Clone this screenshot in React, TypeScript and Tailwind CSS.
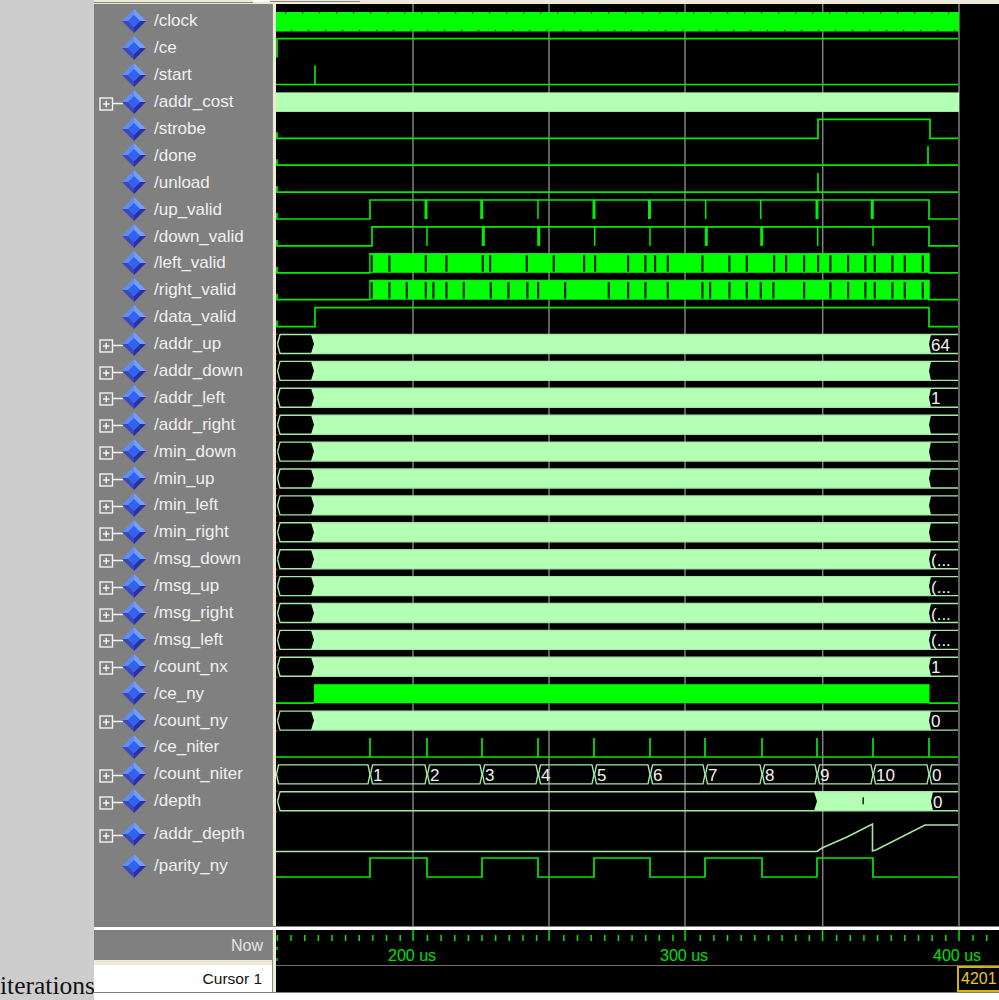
import React from "react";

const sans = "font-['Liberation_Sans',Arial,sans-serif]";

type Sig = { n: string; plus?: boolean; cls?: string };
const signals: Sig[] = [
  { n: "/clock" }, { n: "/ce" }, { n: "/start" }, { n: "/addr_cost", plus: true }, { n: "/strobe" }, { n: "/done" },
  { n: "/unload" }, { n: "/up_valid" }, { n: "/down_valid" }, { n: "/left_valid" }, { n: "/right_valid" }, { n: "/data_valid" },
  { n: "/addr_up", plus: true }, { n: "/addr_down", plus: true }, { n: "/addr_left", plus: true }, { n: "/addr_right", plus: true },
  { n: "/min_down", plus: true }, { n: "/min_up", plus: true }, { n: "/min_left", plus: true }, { n: "/min_right", plus: true },
  { n: "/msg_down", plus: true }, { n: "/msg_up", plus: true }, { n: "/msg_right", plus: true }, { n: "/msg_left", plus: true },
  { n: "/count_nx", plus: true }, { n: "/ce_ny" }, { n: "/count_ny", plus: true }, { n: "/ce_niter" }, { n: "/count_niter", plus: true },
  { n: "/depth", plus: true }, { n: "/addr_depth", plus: true, cls: "mt-[6px]" }, { n: "/parity_ny", plus: false, cls: "mt-[5px]" },
];

function TreeIcon({ plus }: { plus?: boolean }) {
  return (
    <svg width="48" height="26" viewBox="0 0 48 26" className="shrink-0">
      {plus && (
        <g fill="none" stroke="#f4f4f4" strokeWidth="1.4">
          <rect x="1" y="9" width="12.5" height="12" />
          <path d="M4 15H10.5M7.2 11.8V18.2M13.5 14.5H24" />
        </g>
      )}
      <polygon points="35,1 47,13 41,13 35,7" fill="#6f9fff" />
      <polygon points="35,1 23,13 29,13 35,7" fill="#5f8cf5" />
      <polygon points="47,13 35,25 35,19 41,13" fill="#2a2fa8" />
      <polygon points="23,13 35,25 35,19 29,13" fill="#3b47bd" />
      <polygon points="35,7 41,13 35,19 29,13" fill="#2f62f5" />
    </svg>
  );
}

const hi = (i: number) => 11.7 + 26.9 * i;
const lo = (i: number) => 30.7 + 26.9 * i;
const G = "#00ec00";
const B = "#b3ffb3";
const E = "#a6e8a6";
const END = 958;
const iters = [370, 427, 482, 538, 594, 650, 705, 762, 817, 873, 929];

function Line({ d, w = 1.7 }: { d: string; w?: number }) {
  return <path d={d} fill="none" stroke={G} strokeWidth={w} />;
}

function Dips({ i, rise, fall, dips }: { i: number; rise: number; fall: number; dips: [number, number][] }) {
  const h = hi(i);
  const l = lo(i);
  return (
    <g>
      <Line d={`M277 ${l - 6}V${l}H${rise}V${h}H${fall}V${l}H${END}`} />
      {dips.map(([x, w]) => (
        <rect key={x} x={x - w / 2} y={h} width={w} height={l - h} fill="#00f000" />
      ))}
    </g>
  );
}

function Burst({ i, gaps }: { i: number; gaps: number[] }) {
  const h = hi(i);
  const l = lo(i);
  return (
    <g>
      <Line d={`M277 ${l - 6}V${l}H370V${h}H929V${l}H${END}`} />
      <rect x={371} y={h} width={558} height={l - h} fill="#00ff00" />
      {gaps.map((x) => (
        <rect key={x} x={x - 1} y={h + 1.4} width={2.2} height={l - h - 2.6} fill="#062006" />
      ))}
    </g>
  );
}

function Bus({ i, from = 314, to = 929, value, tick }: { i: number; from?: number; to?: number; value?: string; tick?: number }) {
  const t = hi(i);
  const b = lo(i);
  const m = (t + b) / 2;
  return (
    <g>
      <polygon
        points={`${from - 3},${t} ${to + 2},${t} ${to},${m} ${to + 2},${b} ${from - 3},${b} ${from},${m}`}
        fill={B}
      />
      <path
        d={`M277.5 ${m}L280 ${t}H${END}M277.5 ${m}L280 ${b}H${END}`}
        fill="none"
        stroke={E}
        strokeWidth="1.4"
      />
      <rect x="276" y={t - 1} width="1.5" height="1.5" fill="#e02020" />
      <rect x="276" y={b} width="1.5" height="1.5" fill="#e02020" />
      {tick && <rect x={tick} y={m - 4} width="1.4" height="7" fill="#111" />}
      {value && (
        <text x={to + 2} y={b - 3} fontFamily="'Liberation Sans',Arial,sans-serif" fontSize="17" fill="#f2f2f2">
          {value}
        </text>
      )}
    </g>
  );
}

function Waves() {
  const notchTop: number[] = [];
  const notchBot: number[] = [];
  for (let k = 0; k < 40; k++) {
    notchTop.push(285 + k * 17);
    notchBot.push(291 + k * 17);
  }
  const upDips: [number, number][] = [[426, 3], [481.7, 3], [538, 1.5], [594, 3], [649.5, 3], [705.7, 1.5], [760.7, 1.5], [817, 3], [872.3, 3]];
  const dnDips: [number, number][] = [[427, 1.5], [483.3, 3], [538.7, 3], [594.7, 1.5], [650, 1.5], [706.3, 3], [761.7, 3], [817.7, 1.5], [873, 1.5]];
  const leftGaps = [371.7, 389.3, 425.7, 446.3, 482.7, 490, 526.7, 553.7, 584, 595, 628, 645.3, 655, 667.7, 702.3, 729.3, 746.7, 774, 786, 804, 818, 830.3, 848, 865.3, 874.7, 892.3, 904.7, 922.7];
  const rightGaps = [371.7, 389.3, 406.7, 425.7, 433.3, 446.3, 463.7, 490.7, 508.3, 527.3, 538, 565, 608.7, 628, 645.3, 667.7, 702.3, 710, 729.3, 746.7, 760.7, 773.3, 804, 830.3, 848, 865.3, 874.7, 892.3, 904.7, 922.7];
  const segs: [number, number, string][] = [
    [276, 370, ""], [370, 427, "1"], [427, 482, "2"], [482, 538, "3"], [538, 594, "4"], [594, 650, "5"],
    [650, 705, "6"], [705, 762, "7"], [762, 817, "8"], [817, 873, "9"], [873, 929, "10"], [929, 958, "0"],
  ];
  const tc = hi(28);
  const bc = lo(28);
  const mc = (tc + bc) / 2;
  return (
    <svg width="723" height="922" viewBox="276 4 723 922" className="block bg-black shrink-0">
      <path d="M413 4V926M549 4V926M685 4V926M822.7 4V926M959 4V926" stroke="#808080" strokeWidth="1.5" fill="none" />

      <rect x="276" y="12" width="683" height="19.5" fill="#00ff00" />
      {notchTop.map((x) => <rect key={x} x={x} y="12" width="1.2" height="1.6" fill="#043004" />)}
      {notchBot.map((x) => <rect key={x} x={x} y="29.9" width="1.2" height="1.6" fill="#043004" />)}

      <Line d={`M277 ${lo(1)}V${hi(1)}H${END}`} />
      <Line d={`M276 ${lo(2)}H${END}M315 ${lo(2)}V${lo(2) - 19}`} />
      <rect x="276" y={hi(3)} width="683" height="19.5" fill={B} />
      <Line d={`M277 ${lo(4) - 6}V${lo(4)}H818V${hi(4)}H930V${lo(4)}H${END}`} />
      <Line d={`M277 ${lo(5) - 6}V${lo(5)}H${END}M928 ${lo(5)}V${hi(5)}`} />
      <Line d={`M277 ${lo(6) - 6}V${lo(6)}H${END}M818 ${lo(6)}V${hi(6)}`} />
      <Dips i={7} rise={370} fall={929} dips={upDips} />
      <Dips i={8} rise={372} fall={929} dips={dnDips} />
      <Burst i={9} gaps={leftGaps} />
      <Burst i={10} gaps={rightGaps} />
      <Line d={`M277 ${lo(11) - 6}V${lo(11)}H315V${hi(11)}H929V${lo(11)}H${END}`} />

      <Bus i={12} value="64" />
      <Bus i={13} />
      <Bus i={14} value="1" />
      <Bus i={15} />
      <Bus i={16} />
      <Bus i={17} />
      <Bus i={18} />
      <Bus i={19} />
      <Bus i={20} value="(..." />
      <Bus i={21} value="(..." />
      <Bus i={22} value="(..." />
      <Bus i={23} value="(..." />
      <Bus i={24} value="1" />

      <rect x="314" y={hi(25)} width="615.5" height="19" fill="#00ff00" />
      <Line d={`M276 ${lo(25)}H314M929 ${lo(25)}H${END}`} />

      <Bus i={26} value="0" />

      <Line d={`M276 ${lo(27)}H${END}`} />
      {iters.map((x) => <Line key={x} d={`M${x} ${lo(27)}V${hi(27)}`} />)}

      {segs.map(([a, b, v]) => (
        <g key={a}>
          <path
            d={
              b === END
                ? `M${b} ${tc}H${a + 2.5}L${a + 0.5} ${mc}L${a + 2.5} ${bc}H${b}`
                : `M${a + 0.5} ${mc}L${a + 2.5} ${tc}H${b - 2}L${b} ${mc}L${b - 2} ${bc}H${a + 2.5}Z`
            }
            fill="none"
            stroke={E}
            strokeWidth="1.4"
          />
          {v && (
            <text x={a + 3} y={bc - 3} fontFamily="'Liberation Sans',Arial,sans-serif" fontSize="17" fill="#f2f2f2">
              {v}
            </text>
          )}
        </g>
      ))}

      <Bus i={29} from={817} to={931} value="0" tick={862.5} />

      <path d="M276 851.5H817L822 848L847 837L872.5 824V851L876 850L925 825H958" fill="none" stroke={E} strokeWidth="1.6" />
      <Line d="M276 877H370V858H427V877H482V858H538V877H594V858H650V877H705V858H762V877H817V858H873V877H958" />
    </svg>
  );
}

function Ruler() {
  const ticks: number[] = [];
  for (let k = -1; k < 53; k++) ticks.push(291 + k * 13.64);
  const majors = [413, 549, 685, 822.5, 959];
  return (
    <svg width="723" height="35" viewBox="276 930 723 35" className="block bg-black">
      {ticks.filter((x) => !majors.some((m) => Math.abs(m - x) < 5)).map((x) => (
        <rect key={x} x={x - 0.7} y="935" width="1.5" height="6" fill="#00e800" />
      ))}
      {majors.map((x) => <rect key={x} x={x - 0.7} y="930" width="1.5" height="11" fill="#00e800" />)}
      <path d="M277 947V950M277 958V961" stroke="#00e000" strokeWidth="1.4" fill="none" />
      <g fontFamily="'Liberation Sans',Arial,sans-serif" fontSize="16" fill="#00e000">
        <text x="388" y="961">200 us</text>
        <text x="660" y="961">300 us</text>
        <text x="933" y="961">400 us</text>
      </g>
    </svg>
  );
}

export default function App() {
  return (
    <div className={`flex w-[999px] h-[1000px] overflow-hidden bg-white ${sans}`}>
      <div className="w-[94px] h-full shrink-0 bg-[#cdcdcd] flex items-end">
        <span className="font-['Liberation_Serif','Times_New_Roman',serif] text-[25.5px] leading-[29px] text-[#111] whitespace-nowrap">
          iterations
        </span>
      </div>
      <div className="flex flex-col w-[905px] shrink-0">
        <div className="flex h-[4px] shrink-0 bg-[#ece9d8]">
          <div className="w-[159px] h-[3px] border-b border-[#8a8a80]" />
          <div className="w-[17px] h-[2px] bg-white" />
          <div className="w-[90px] h-[2px] border-b border-[#80807a]" />
        </div>
        <div className="flex h-[922px] shrink-0">
          <div className="w-[178px] shrink-0 bg-[#808080] pt-[3.5px] flex flex-col">
            {signals.map((s) => (
              <div key={s.n} className={`flex items-center h-[26.9px] shrink-0 pl-[5px] ${s.cls ?? ""}`}>
                <TreeIcon plus={s.plus} />
                <span className="ml-[7px] text-[17px] leading-none text-[#f0f0f0] whitespace-nowrap">
                  {s.n}
                </span>
              </div>
            ))}
          </div>
          <div className="w-[4px] shrink-0 bg-[#ece9d8] border-l border-[#8a8a80]" />
          <Waves />
        </div>
        <div className="h-[1px] shrink-0 bg-[#808078]" />
        <div className="h-[3px] shrink-0 bg-white" />
        <div className="flex h-[62px] shrink-0">
          <div className="w-[178px] shrink-0 flex flex-col">
            <div className="h-[30px] pt-[2px] bg-[#808080] flex items-center justify-end pr-[9px] text-[16px] text-[#e4e4e4]">Now</div>
            <div className="h-[5px] bg-[#ece9d8]" />
            <div className="h-[27px] bg-white flex items-center justify-end pr-[10px] text-[15.5px] text-[#111]">Cursor 1</div>
          </div>
          <div className="w-[4px] shrink-0 bg-[#ece9d8] border-l border-[#8a8a80]" />
          <div className="w-[723px] shrink-0 flex flex-col">
            <Ruler />
            <div className="h-[27px] bg-black border-t border-[#707070] flex justify-end">
              <div className="w-[42px] h-[26px] border-2 border-r-0 border-[#d8b400] pl-[2px] text-[16px] leading-[22px] text-[#e8c820] overflow-hidden">
                4201
              </div>
            </div>
          </div>
        </div>
        <div className="h-[1px] shrink-0 bg-[#808078]" />
      </div>
    </div>
  );
}
